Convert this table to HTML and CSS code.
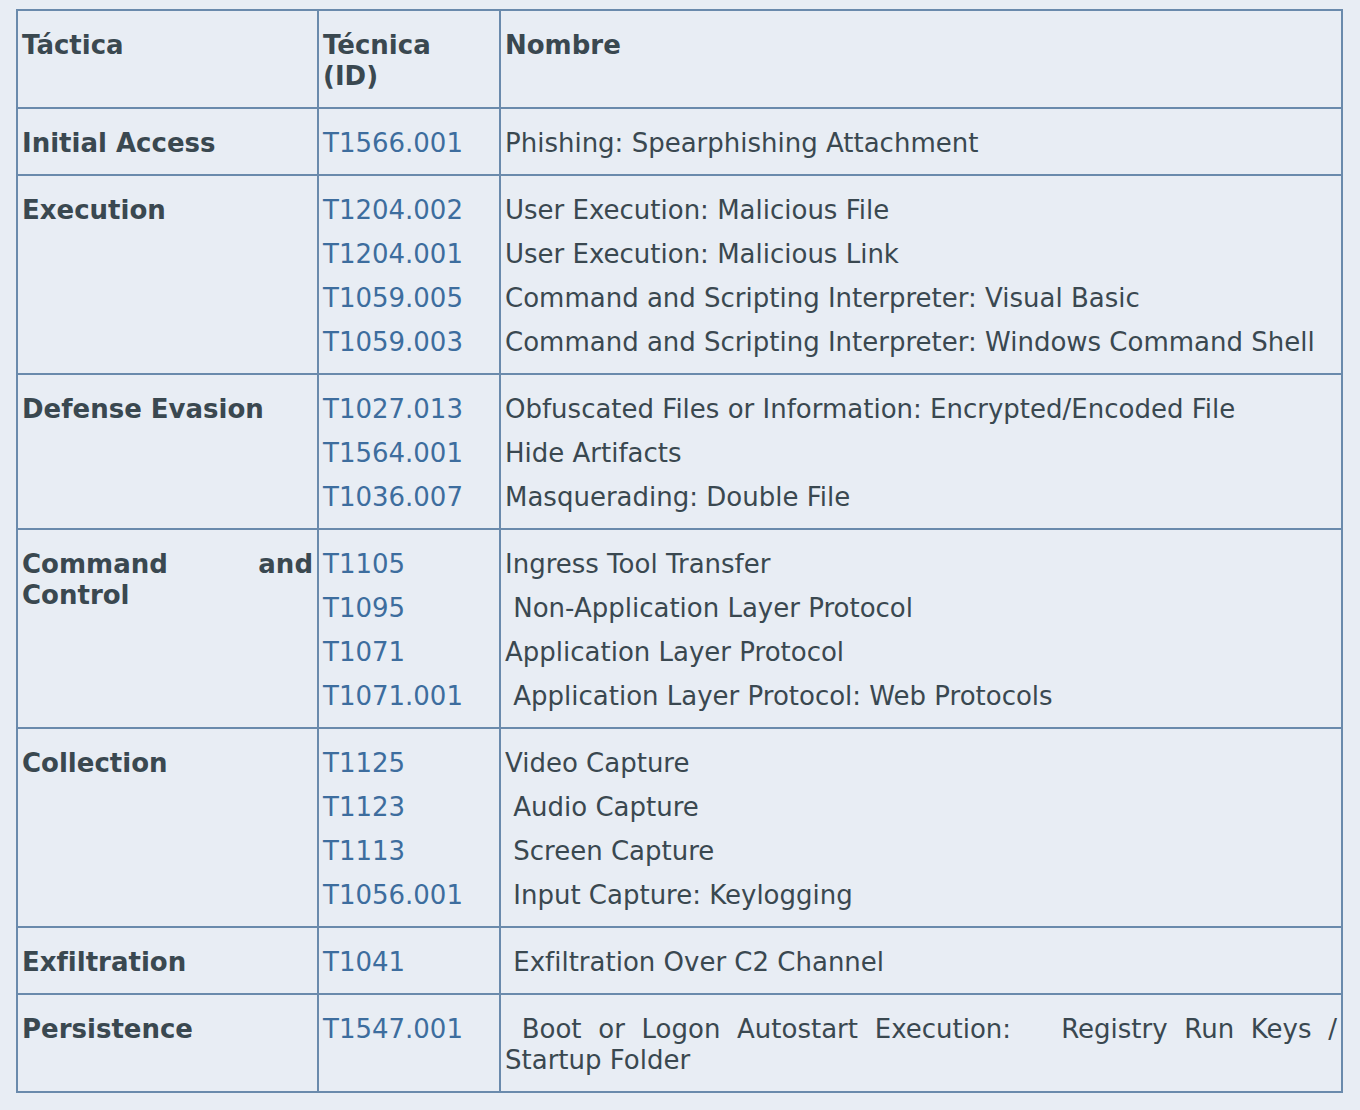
FILE: index.html
```html
<!DOCTYPE html>
<html lang="es">
<head>
<meta charset="utf-8">
<title>MITRE ATT&amp;CK</title>
<link rel="stylesheet" href="styles.css">
</head>
<body>
<div class="wrap">
<table class="mitre">
  <colgroup>
    <col class="c1"><col class="c2"><col class="c3">
  </colgroup>
  <thead>
    <tr><th>Táctica</th><th>Técnica<br>(ID)</th><th>Nombre</th></tr>
  </thead>
  <tbody>
    <tr>
      <td class="tac">Initial Access</td>
      <td class="ids"><div class="list"><a>T1566.001</a></div></td>
      <td class="names"><div class="list"><span>Phishing: Spearphishing Attachment</span></div></td>
    </tr>
    <tr>
      <td class="tac">Execution</td>
      <td class="ids"><div class="list"><a>T1204.002</a><a>T1204.001</a><a>T1059.005</a><a>T1059.003</a></div></td>
      <td class="names"><div class="list"><span>User Execution: Malicious File</span><span>User Execution: Malicious Link</span><span>Command and Scripting Interpreter: Visual Basic</span><span>Command and Scripting Interpreter: Windows Command Shell</span></div></td>
    </tr>
    <tr>
      <td class="tac">Defense Evasion</td>
      <td class="ids"><div class="list"><a>T1027.013</a><a>T1564.001</a><a>T1036.007</a></div></td>
      <td class="names"><div class="list"><span>Obfuscated Files or Information: Encrypted/Encoded File</span><span>Hide Artifacts</span><span>Masquerading: Double File</span></div></td>
    </tr>
    <tr>
      <td class="tac">Command and Control</td>
      <td class="ids"><div class="list"><a>T1105</a><a>T1095</a><a>T1071</a><a>T1071.001</a></div></td>
      <td class="names"><div class="list"><span>Ingress Tool Transfer</span><span>&nbsp;Non-Application Layer Protocol</span><span>Application Layer Protocol</span><span>&nbsp;Application Layer Protocol: Web Protocols</span></div></td>
    </tr>
    <tr>
      <td class="tac">Collection</td>
      <td class="ids"><div class="list"><a>T1125</a><a>T1123</a><a>T1113</a><a>T1056.001</a></div></td>
      <td class="names"><div class="list"><span>Video Capture</span><span>&nbsp;Audio Capture</span><span>&nbsp;Screen Capture</span><span>&nbsp;Input Capture: Keylogging</span></div></td>
    </tr>
    <tr>
      <td class="tac">Exfiltration</td>
      <td class="ids"><div class="list"><a>T1041</a></div></td>
      <td class="names"><div class="list"><span>&nbsp;Exfiltration Over C2 Channel</span></div></td>
    </tr>
    <tr>
      <td class="tac">Persistence</td>
      <td class="ids"><div class="list"><a>T1547.001</a></div></td>
      <td class="names"><div class="list"><span class="just">&nbsp;Boot or Logon Autostart Execution: &nbsp; Registry Run Keys / Startup Folder</span></div></td>
    </tr>
  </tbody>
</table>
</div>
</body>
</html>
```
FILE: styles.css
```css
html, body {
  margin: 0;
  padding: 0;
  background: #e8edf4;
}
body {
  font-family: "DejaVu Sans", Verdana, sans-serif;
  font-size: 26px;
  line-height: 31px;
  color: #3a4850;
}
.wrap {
  padding: 9px 0 0 16px;
}
.mitre {
  border-collapse: collapse;
  table-layout: fixed;
  width: 1327px;
}
.c1 { width: 301px; }
.c2 { width: 182px; }
.c3 { width: 842px; }
.mitre th,
.mitre td {
  border: 2px solid #6a8aac;
  padding: 19px 4px 15px;
  vertical-align: top;
  text-align: left;
}
.mitre th {
  font-weight: bold;
}
.mitre td.tac {
  font-weight: bold;
  text-align: justify;
}
.list {
  display: flex;
  flex-direction: column;
  gap: 13px;
}
.list a {
  color: #3d6d9e;
  text-decoration: none;
}
.list span {
  display: block;
  white-space: pre-wrap;
}
.list span.just {
  white-space: normal;
  text-align: justify;
}
```
